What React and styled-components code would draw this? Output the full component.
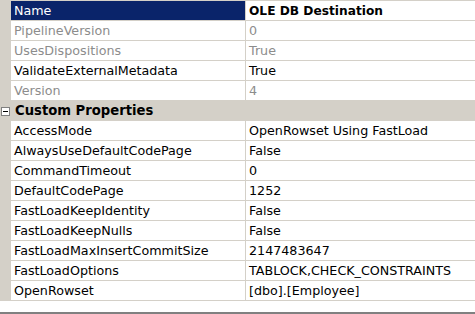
import React from "react";
import styled, { createGlobalStyle } from "styled-components";

const Global = createGlobalStyle`
  html, body { margin: 0; padding: 0; background: #ffffff; }
  body { font-family: "DejaVu Sans", "Liberation Sans", sans-serif; }
`;

const Grid = styled.div`
  width: 475px;
  height: 314px;
  display: flex;
  flex-direction: column;
  background: #ffffff;
  border-top: 1px solid #d4d0c8;
  box-sizing: border-box;
`;

const Rows = styled.div`
  display: flex;
  flex-direction: column;
`;

const Row = styled.div`
  display: flex;
  height: 20px;
  box-sizing: border-box;
  border-bottom: 1px solid #d4d0c8;
  background: ${(p) => (p.$group ? "#d4d0c8" : "#ffffff")};
`;

const Margin = styled.div`
  width: 11px;
  flex: none;
  background: #d4d0c8;
  display: flex;
  align-items: center;
  justify-content: center;
  margin-bottom: -1px;
`;

const NameCell = styled.div`
  width: 231px;
  flex: none;
  padding-left: 3px;
  border-right: 1px solid #d4d0c8;
  display: flex;
  align-items: center;
  font-size: 12.7px;
  white-space: nowrap;
  overflow: hidden;
  color: ${(p) => (p.$selected ? "#ffffff" : p.$disabled ? "#8c8c8c" : "#000000")};
  background: ${(p) => (p.$selected ? "#0a246a" : "transparent")};
`;

const ValueCell = styled.div`
  flex: 1;
  padding-left: 3px;
  display: flex;
  align-items: center;
  font-size: ${(p) => (p.$bold ? "12.2px" : "12.7px")};
  white-space: nowrap;
  overflow: hidden;
  font-weight: ${(p) => (p.$bold ? 700 : 400)};
  color: ${(p) => (p.$disabled ? "#8c8c8c" : "#000000")};
`;

const GroupLabel = styled.div`
  flex: 1;
  padding-left: 4px;
  display: flex;
  align-items: center;
  font-size: 13.2px;
  font-weight: 700;
  color: #000000;
`;

const Footer = styled.div`
  flex: 1;
  border-bottom: 2px solid #808080;
`;

const MinusBox = () => (
  <svg width="9" height="9" viewBox="0 0 9 9">
    <rect x="0.5" y="0.5" width="8" height="8" fill="#ffffff" stroke="#808080" />
    <line x1="2" y1="4.5" x2="7" y2="4.5" stroke="#000000" />
  </svg>
);

const top = [
  { name: "Name", value: "OLE DB Destination", selected: true, bold: true },
  { name: "PipelineVersion", value: "0", disabled: true },
  { name: "UsesDispositions", value: "True", disabled: true },
  { name: "ValidateExternalMetadata", value: "True" },
  { name: "Version", value: "4", disabled: true },
];

const custom = [
  { name: "AccessMode", value: "OpenRowset Using FastLoad" },
  { name: "AlwaysUseDefaultCodePage", value: "False" },
  { name: "CommandTimeout", value: "0" },
  { name: "DefaultCodePage", value: "1252" },
  { name: "FastLoadKeepIdentity", value: "False" },
  { name: "FastLoadKeepNulls", value: "False" },
  { name: "FastLoadMaxInsertCommitSize", value: "2147483647" },
  { name: "FastLoadOptions", value: "TABLOCK,CHECK_CONSTRAINTS" },
  { name: "OpenRowset", value: "[dbo].[Employee]" },
];

const PropRow = ({ p }) => (
  <Row>
    <Margin />
    <NameCell $selected={p.selected} $disabled={p.disabled}>{p.name}</NameCell>
    <ValueCell $bold={p.bold} $disabled={p.disabled}>{p.value}</ValueCell>
  </Row>
);

export default function App() {
  return (
    <>
      <Global />
      <Grid>
        <Rows>
          {top.map((p) => (
            <PropRow key={p.name} p={p} />
          ))}
          <Row $group>
            <Margin>
              <MinusBox />
            </Margin>
            <GroupLabel>Custom Properties</GroupLabel>
          </Row>
          {custom.map((p) => (
            <PropRow key={p.name} p={p} />
          ))}
        </Rows>
        <Footer />
      </Grid>
    </>
  );
}
